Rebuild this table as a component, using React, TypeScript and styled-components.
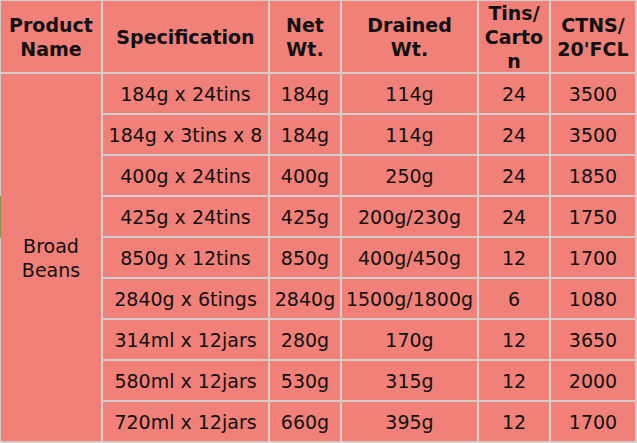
import React from "react";
import styled, { createGlobalStyle } from "styled-components";

const Global = createGlobalStyle`
  html, body { margin: 0; padding: 0; background: #ffffff; }
  body { font-family: "DejaVu Sans", Verdana, sans-serif; }
`;

const Frame = styled.div`
  position: relative;
  width: 637px;
  height: 443px;
`;

const Grid = styled.div`
  display: grid;
  grid-template-columns: 100px 165px 70px 135px 70px 84px;
  grid-template-rows: 71px repeat(9, 39px);
  gap: 2px;
  padding: 1px 2px 2px 1px;
  background: #d3cdcd;
  width: fit-content;
`;

const Cell = styled.div<{ $head?: boolean }>`
  background: #f08078;
  color: #111;
  display: flex;
  align-items: center;
  justify-content: center;
  text-align: center;
  font-size: 19px;
  line-height: 24px;
  font-weight: ${(p) => (p.$head ? 700 : 400)};
  white-space: pre-line;
  overflow: hidden;
`;

const ProductCell = styled(Cell)`
  grid-row: 2 / span 9;
`;

const Marker = styled.div`
  position: absolute;
  left: 0;
  top: 196px;
  width: 1px;
  height: 42px;
  background: #8a9450;
`;

const headers = [
  "Product\nName",
  "Specification",
  "Net\nWt.",
  "Drained\nWt.",
  "Tins/\nCarto\nn",
  "CTNS/\n20'FCL",
];

const rows: string[][] = [
  ["184g x 24tins", "184g", "114g", "24", "3500"],
  ["184g x 3tins x 8", "184g", "114g", "24", "3500"],
  ["400g x 24tins", "400g", "250g", "24", "1850"],
  ["425g x 24tins", "425g", "200g/230g", "24", "1750"],
  ["850g x 12tins", "850g", "400g/450g", "12", "1700"],
  ["2840g x 6tings", "2840g", "1500g/1800g", "6", "1080"],
  ["314ml x 12jars", "280g", "170g", "12", "3650"],
  ["580ml x 12jars", "530g", "315g", "12", "2000"],
  ["720ml x 12jars", "660g", "395g", "12", "1700"],
];

export default function App() {
  return (
    <Frame>
      <Global />
      <Grid>
        {headers.map((h) => (
          <Cell key={h} $head>
            {h}
          </Cell>
        ))}
        <ProductCell>{"Broad\nBeans"}</ProductCell>
        {rows.map((r, i) =>
          r.map((v, j) => <Cell key={`${i}-${j}`}>{v}</Cell>)
        )}
      </Grid>
      <Marker />
    </Frame>
  );
}
